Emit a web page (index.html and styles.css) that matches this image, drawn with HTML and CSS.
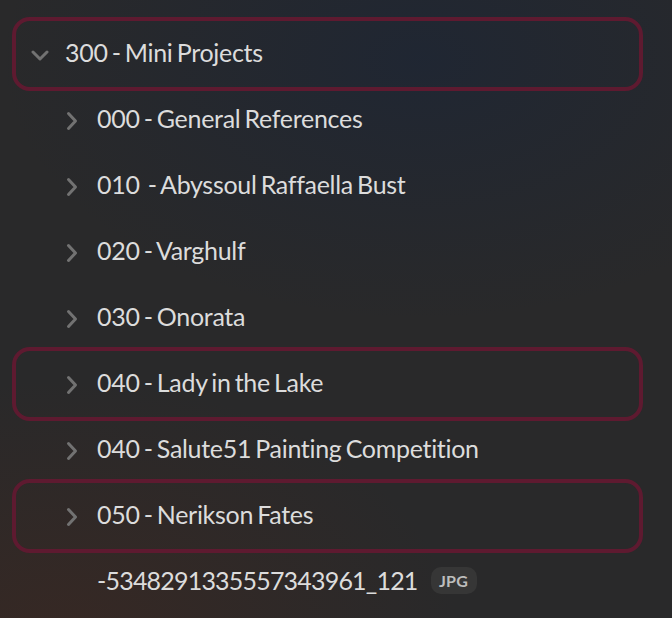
FILE: index.html
```html
<!DOCTYPE html>
<html>
<head>
<meta charset="utf-8">
<link rel="stylesheet" href="styles.css">
</head>
<body>
<div class="tree">
  <div class="row top active">
    <svg class="chev down" width="18" height="11" viewBox="0 0 18 11"><path d="M2 2 L9 9 L16 2" /></svg>
    <span class="label">300 - Mini Projects</span>
  </div>
  <div class="row child">
    <svg class="chev right" width="12" height="20" viewBox="0 0 12 20"><path d="M2.5 2.5 L9.5 10 L2.5 17.5" /></svg>
    <span class="label">000 - General References</span>
  </div>
  <div class="row child">
    <svg class="chev right" width="12" height="20" viewBox="0 0 12 20"><path d="M2.5 2.5 L9.5 10 L2.5 17.5" /></svg>
    <span class="label">010&nbsp; - Abyssoul Raffaella Bust</span>
  </div>
  <div class="row child">
    <svg class="chev right" width="12" height="20" viewBox="0 0 12 20"><path d="M2.5 2.5 L9.5 10 L2.5 17.5" /></svg>
    <span class="label">020 - Varghulf</span>
  </div>
  <div class="row child">
    <svg class="chev right" width="12" height="20" viewBox="0 0 12 20"><path d="M2.5 2.5 L9.5 10 L2.5 17.5" /></svg>
    <span class="label">030 - Onorata</span>
  </div>
  <div class="row child active">
    <svg class="chev right" width="12" height="20" viewBox="0 0 12 20"><path d="M2.5 2.5 L9.5 10 L2.5 17.5" /></svg>
    <span class="label">040 - Lady in the Lake</span>
  </div>
  <div class="row child">
    <svg class="chev right" width="12" height="20" viewBox="0 0 12 20"><path d="M2.5 2.5 L9.5 10 L2.5 17.5" /></svg>
    <span class="label">040 - Salute51 Painting Competition</span>
  </div>
  <div class="row child active">
    <svg class="chev right" width="12" height="20" viewBox="0 0 12 20"><path d="M2.5 2.5 L9.5 10 L2.5 17.5" /></svg>
    <span class="label">050 - Nerikson Fates</span>
  </div>
  <div class="row file">
    <span class="label">-5348291335557343961_121</span>
    <span class="badge">JPG</span>
  </div>
</div>
</body>
</html>
```
FILE: styles.css
```css
html, body {
  margin: 0;
  padding: 0;
  width: 672px;
  height: 618px;
  overflow: hidden;
}
body {
  background:
    radial-gradient(ellipse 420px 260px at 420px 60px, rgba(30, 38, 52, 0.85), rgba(30, 38, 52, 0) 100%),
    radial-gradient(ellipse 400px 260px at 60px 640px, rgba(58, 40, 34, 0.8), rgba(58, 40, 34, 0) 100%),
    #29292a;
  font-family: "Lato", "Open Sans", sans-serif;
  color: #dcdcdc;
}
.tree {
  padding: 21px 33px 0 16px;
  display: flex;
  flex-direction: column;
}
.row {
  position: relative;
  height: 66px;
  display: flex;
  align-items: center;
  font-size: 25px;
  white-space: nowrap;
}
.row.active::before {
  content: "";
  position: absolute;
  left: -4px;
  right: -4px;
  top: -4px;
  bottom: -4px;
  border: 4px solid #5e1a30;
  border-radius: 18px;
  box-sizing: border-box;
}
.chev path {
  fill: none;
  stroke: #727272;
  stroke-width: 3;
  stroke-linecap: round;
  stroke-linejoin: round;
}
.top .chev {
  margin-left: 15px;
  margin-right: 16px;
  margin-top: 2px;
}
.child .chev {
  margin-left: 50px;
  margin-right: 19px;
  margin-top: 2px;
}
.label {
  letter-spacing: -0.3px;
  word-spacing: -2px;
  margin-top: -4px;
}
.file .label {
  margin-left: 81px;
  letter-spacing: -0.8px;
}
.badge {
  margin-left: 13px;
  margin-top: -4px;
  width: 46px;
  height: 27px;
  border-radius: 10px;
  background: #363636;
  color: #bdbdbd;
  font-size: 16px;
  font-weight: 700;
  display: flex;
  align-items: center;
  justify-content: center;
  letter-spacing: 0.3px;
}
```
